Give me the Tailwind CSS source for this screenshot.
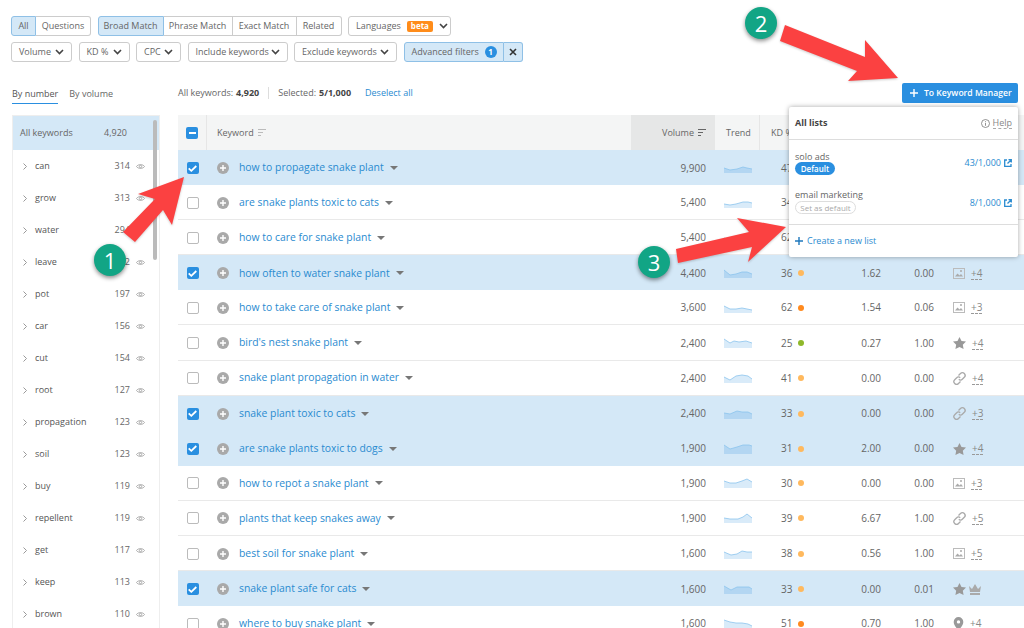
<!DOCTYPE html>
<html lang="en">
<head>
    <meta charset="UTF-8">
    <title>Keyword Magic Tool</title>
    <script src="https://cdn.jsdelivr.net/npm/@tailwindcss/browser@4"></script>
</head>
<body class="bg-white">
<div class="relative w-[1024px] h-[628px] overflow-hidden whitespace-nowrap text-[#666] text-[9px] font-['Open_Sans','Noto_Sans',sans-serif]">

    <!-- filters -->
    <div class="pt-[16px] pl-[11px] flex flex-col gap-[6px]">
        <div class="flex gap-[6.5px] h-[20px]">
            <div class="flex">
                <div class="w-[25px] flex items-center justify-center bg-[#d4e8f7] border border-[#8fc0e6] rounded-l-[3px]">All</div>
                <div class="w-[55px] flex items-center justify-center border border-l-0 border-[#ccc] rounded-r-[3px]">Questions</div>
            </div>
            <div class="flex">
                <div class="w-[66px] flex items-center justify-center bg-[#d4e8f7] border border-[#8fc0e6] rounded-l-[3px]">Broad Match</div>
                <div class="w-[69px] flex items-center justify-center border-y border-r border-[#ccc]">Phrase Match</div>
                <div class="w-[64px] flex items-center justify-center border-y border-r border-[#ccc]">Exact Match</div>
                <div class="w-[45px] flex items-center justify-center border-y border-r border-[#ccc] rounded-r-[3px]">Related</div>
            </div>
            <div class="w-[103px] flex items-center pl-[7px] border border-[#ccc] rounded-[3px]">
                Languages
                <span class="ml-[6px] px-[4px] h-[11px] leading-[10px] rounded-[2px] bg-[#ff8c1a] text-white text-[8px] font-bold">beta</span>
                <svg class="ml-[6px] w-[9px] h-[6px]" viewBox="0 0 9 6" fill="none" stroke="#444" stroke-width="1.6"><path d="M1 1l3.5 3.5L8 1"/></svg>
            </div>
        </div>
        <div class="flex gap-[6.5px] h-[20px]">
            <div class="w-[61px] flex items-center justify-between px-[7px] border border-[#ccc] rounded-[3px]">Volume <svg class="w-[9px] h-[6px]" viewBox="0 0 9 6" fill="none" stroke="#444" stroke-width="1.6"><path d="M1 1l3.5 3.5L8 1"/></svg></div>
            <div class="w-[51px] flex items-center justify-between px-[7px] border border-[#ccc] rounded-[3px]">KD % <svg class="w-[9px] h-[6px]" viewBox="0 0 9 6" fill="none" stroke="#444" stroke-width="1.6"><path d="M1 1l3.5 3.5L8 1"/></svg></div>
            <div class="w-[45px] flex items-center justify-between px-[7px] border border-[#ccc] rounded-[3px]">CPC <svg class="w-[9px] h-[6px]" viewBox="0 0 9 6" fill="none" stroke="#444" stroke-width="1.6"><path d="M1 1l3.5 3.5L8 1"/></svg></div>
            <div class="w-[100px] flex items-center justify-between px-[7px] border border-[#ccc] rounded-[3px]">Include keywords <svg class="w-[9px] h-[6px]" viewBox="0 0 9 6" fill="none" stroke="#444" stroke-width="1.6"><path d="M1 1l3.5 3.5L8 1"/></svg></div>
            <div class="w-[103px] flex items-center justify-between px-[7px] border border-[#ccc] rounded-[3px]">Exclude keywords <svg class="w-[9px] h-[6px]" viewBox="0 0 9 6" fill="none" stroke="#444" stroke-width="1.6"><path d="M1 1l3.5 3.5L8 1"/></svg></div>
            <div class="flex">
                <div class="w-[100px] flex items-center justify-between pl-[7px] pr-[6px] bg-[#d4e8f7] border border-[#8fc0e6] rounded-l-[3px]">Advanced filters <span class="w-[12px] h-[12px] rounded-full bg-[#2a8fe0] text-white text-[8px] font-bold flex items-center justify-center">1</span></div>
                <div class="w-[19px] flex items-center justify-center bg-[#d4e8f7] border-y border-r border-[#8fc0e6] rounded-r-[3px]">
                    <svg class="w-[8px] h-[8px]" viewBox="0 0 8 8" stroke="#333" stroke-width="1.6"><path d="M1 1l6 6M7 1L1 7"/></svg>
                </div>
            </div>
        </div>
    </div>

    <div class="flex mt-[21px]">
        <!-- sidebar -->
        <div class="w-[178px] pl-[12px] shrink-0">
            <div class="flex gap-[11px] h-[32px] pt-[4px]">
                <div class="h-[17px] border-b border-[#2a8fe0] text-[#555]">By number</div>
                <div class="text-[#666]">By volume</div>
            </div>
            <div class="relative w-[148px] border-x border-t border-[#eee]">
                <div class="h-[34px] flex items-center justify-between pl-[7px] pr-[32px] bg-[#d4e8f7]"><span>All keywords</span><span>4,920</span></div>
                <div id="groups"></div>
                <div class="absolute right-[2px] top-[4px] w-[4px] h-[140px] rounded-full bg-[#bbb]"></div>
            </div>
        </div>

        <!-- table -->
        <div class="w-[846px]">
            <div class="flex items-center h-[32px] pb-[12px]">
                <span>All keywords:</span><b class="ml-[3px] text-[#444]">4,920</b>
                <span class="ml-[9px] w-px h-[12px] bg-[#ddd]"></span>
                <span class="ml-[9px]">Selected:</span><b class="ml-[3px] text-[#444]">5/1,000</b>
                <span class="ml-[14px] text-[#2a8bd0]">Deselect all</span>
                <div class="ml-auto mr-[6px] w-[116px] h-[20px] bg-[#2a8fe0] rounded-[2px] text-white text-[8.6px] flex items-center pl-[8px] gap-[6px] font-semibold">
                    <svg class="w-[8px] h-[8px]" viewBox="0 0 8 8" stroke="#fff" stroke-width="1.4"><path d="M4 0v8M0 4h8"/></svg>
                    To Keyword Manager
                </div>
            </div>
            <div class="flex h-[35px] items-center bg-[#f4f5f5]">
                <div class="w-[29px] h-full flex items-center justify-center border-r border-[#e6e6e6]">
                    <span class="w-[12px] h-[12px] rounded-[2px] bg-[#2a8fe0] flex items-center justify-center"><span class="w-[7px] h-[2px] bg-white"></span></span>
                </div>
                <div class="w-[424px] pl-[10px] flex items-center gap-[4px]">Keyword
                    <svg class="w-[8px] h-[7px]" viewBox="0 0 8 7" stroke="#bbb"><path d="M0 .5h8M0 3.5h5M0 6.5h3"/></svg>
                </div>
                <div class="w-[84px] h-full flex items-center justify-end gap-[4px] pr-[9px] bg-[#e6e7e7]">Volume
                    <svg class="w-[8px] h-[7px]" viewBox="0 0 8 7" stroke="#666"><path d="M0 .5h8M0 3.5h5M0 6.5h3"/></svg>
                </div>
                <div class="w-[45px] h-full flex items-center pl-[11px] border-r border-[#e6e6e6]">Trend</div>
                <div class="pl-[11px]">KD %</div>
            </div>
            <div id="rows"></div>
        </div>
    </div>

    <!-- lists dropdown -->
    <div class="absolute left-[789px] top-[107px] w-[229px] h-[150px] bg-white rounded-[2px] shadow-[0_0_5px_rgba(0,0,0,0.35)] flex flex-col">
        <div class="h-[33px] flex items-center justify-between px-[6px] border-b border-[#ddd]">
            <b class="text-[#444]">All lists</b>
            <div class="flex items-center gap-[3px] text-[#888]">
                <svg class="w-[9px] h-[9px]" viewBox="0 0 9 9" fill="none" stroke="#777" stroke-width=".8"><circle cx="4.5" cy="4.5" r="4"/><path d="M4.5 2.2v.8M4.5 3.8v3"/></svg>
                <span class="border-b border-dashed border-[#aaa] leading-[11px]">Help</span>
            </div>
        </div>
        <div class="h-[38px] mt-[10px] px-[6px] flex justify-between">
            <div>
                <div class="leading-[13px] text-[#666]">solo ads</div>
                <div class="-mt-[1px] w-[40px] h-[13px] rounded-full bg-[#2a8fe0] text-white text-[8px] font-semibold flex items-center justify-center">Default</div>
            </div>
            <div class="flex items-center h-[26px] gap-[3px] text-[#2a8bd0]">43/1,000
                <svg class="w-[8px] h-[8px]" viewBox="0 0 8 8" fill="none" stroke="#2a8bd0" stroke-width="1.3"><path d="M3 1H.7v6.3H7V5M4.5.7h2.8v2.8M7 1L3.5 4.5"/></svg>
            </div>
        </div>
        <div class="h-[37px] px-[6px] flex justify-between border-b border-[#ddd]">
            <div>
                <div class="leading-[13px] text-[#666]">email marketing</div>
                <div class="w-[61px] h-[13px] rounded-full border border-[#ddd] text-[#aaa] text-[8px] flex items-center justify-center">Set as default</div>
            </div>
            <div class="flex items-center h-[29px] gap-[3px] text-[#2a8bd0]">8/1,000
                <svg class="w-[8px] h-[8px]" viewBox="0 0 8 8" fill="none" stroke="#2a8bd0" stroke-width="1.3"><path d="M3 1H.7v6.3H7V5M4.5.7h2.8v2.8M7 1L3.5 4.5"/></svg>
            </div>
        </div>
        <div class="flex-1 flex items-center gap-[4px] px-[6px] text-[#2a8bd0]">
            <svg class="w-[8px] h-[8px]" viewBox="0 0 8 8" stroke="#1f78bd" stroke-width="1.4"><path d="M4 0v8M0 4h8"/></svg>
            Create a new list
        </div>
    </div>

    <!-- annotations -->
    <svg class="absolute left-0 top-0 w-[1024px] h-[628px] pointer-events-none drop-shadow-[0_1px_1px_rgba(0,0,0,0.2)]" viewBox="0 0 1024 628">
        <path fill="#fb4141" d="M184 177L172 225L163 210L135 242L123 232L155 199L138 194Z"/>
        <path fill="#fb4141" d="M785 25L780 41L857 71L848 81L898 78L865 40L865 57Z"/>
        <path fill="#fb4141" d="M676 249L678 263L752 247L748 262L786 227L737 218L749 232Z"/>
    </svg>
    <div class="absolute left-[94px] top-[244px] w-[32px] h-[32px] rounded-full bg-[#12a585] text-white text-[22px] flex items-center justify-center shadow-[0_2px_4px_rgba(0,0,0,0.45)]">1</div>
    <div class="absolute left-[745px] top-[7px] w-[32px] h-[32px] rounded-full bg-[#12a585] text-white text-[22px] flex items-center justify-center shadow-[0_2px_4px_rgba(0,0,0,0.45)]">2</div>
    <div class="absolute left-[638px] top-[246px] w-[32px] h-[32px] rounded-full bg-[#12a585] text-white text-[22px] flex items-center justify-center shadow-[0_2px_4px_rgba(0,0,0,0.45)]">3</div>
</div>

<script>
    const groups = [['can','314'],['grow','313'],['water','294'],['leave','202'],['pot','197'],['car','156'],['cut','154'],['root','127'],['propagation','123'],['soil','123'],['buy','119'],['repellent','119'],['get','117'],['keep','113'],['brown','110']];
    const eye = '<svg class="w-[9px] h-[7px]" viewBox="0 0 9 7" fill="none" stroke="#999" stroke-width=".8"><path d="M.5 3.5C2 1 7 1 8.5 3.5 7 6 2 6 .5 3.5z"/><circle cx="4.5" cy="3.5" r="1.2"/></svg>';
    document.getElementById('groups').innerHTML = groups.map(g => `
        <div class="h-[32px] flex items-center pl-[10px] pr-[14px]">
            <svg class="w-[4px] h-[7px] mr-[8px]" viewBox="0 0 4 7" fill="none" stroke="#999"><path d="M.5.5l3 3-3 3"/></svg>
            <span class="text-[#555]">${g[0]}</span>
            <span class="ml-auto mr-[6px]">${g[1]}</span>${eye}
        </div>`).join('');

    const icons = {
        image: '<svg class="w-[12px] h-[11px]" viewBox="0 0 12 11" fill="none" stroke="#bbb"><rect x=".5" y=".5" width="11" height="10"/><path d="M2 8.5l2.5-3 2 2 1.5-1.500 2 2.500z" fill="#aaa" stroke="none"/><circle cx="8" cy="3" r="1" fill="#aaa" stroke="none"/></svg>',
        star: '<svg class="w-[13px] h-[12px]" viewBox="0 0 13 12" fill="#999"><path d="M6.500 0l2 4 4.500.6-3.200 3.200.8 4.200-4.100-2.100L2.400 12l.8-4.200L0 4.600 4.500 4z"/></svg>',
        link: '<svg class="w-[13px] h-[13px]" viewBox="0 0 13 13" fill="none" stroke="#aaa" stroke-width="1.3"><path d="M5.500 3.500l2-2a2.400 2.400 0 0 1 3.800 3.800l-2 2a2.400 2.400 0 0 1-3.500 0"/><path d="M7.500 9.500l-2 2a2.400 2.400 0 0 1-3.800-3.800l2-2a2.400 2.400 0 0 1 3.500 0"/></svg>',
        pin: '<svg class="w-[11px] h-[14px]" viewBox="0 0 11 14"><path fill="#999" fill-rule="evenodd" d="M5.500 14C3 10 .7 7.700.7 4.900a4.800 4.800 0 0 1 9.600 0C10.300 7.700 8 10 5.500 14zM5.500 3.200a1.700 1.700 0 1 0 0 3.400 1.700 1.700 0 0 0 0-3.400z"/></svg>'
    };
    const crown = '<svg class="w-[12px] h-[11px] ml-[3px]" viewBox="0 0 12 11" fill="#aaa"><path d="M0 2l3 3 3-5 3 5 3-3-1 6H1zM1 9h10v2H1z"/></svg>';
    const plus = '<svg class="w-[12px] h-[12px] shrink-0" viewBox="0 0 12 12"><circle cx="6" cy="6" r="6" fill="#a9a9a9"/><path d="M6 3v6M3 6h6" stroke="#fff" stroke-width="1.400"/></svg>';
    const tick = '<svg class="w-[9px] h-[7px]" viewBox="0 0 9 7" fill="none" stroke="#fff" stroke-width="1.800"><path d="M.7 3.300l2.600 2.500L8.300 1"/></svg>';
    const dots = { y: 'bg-[#ffb95e]', o: 'bg-[#ff8a1e]', g: 'bg-[#8fb82a]' };

    // keyword, volume, kd, dot, cpc, com, serp icon, extra, checked, sparkline
    // first three rows sit under the dropdown, so their right cells stay empty
    const rows = [
        ['how to propagate snake plant','9,900','47','','','','','',1,'0 5 6 7 13 6 19 4 23 5 28 6'],
        ['are snake plants toxic to cats','5,400','34','','','','','',0,'0 6 6 7 12 6 19 4 24 4 28 5'],
        ['how to care for snake plant','5,400','62','','','','','',0,'0 5 6 7 12 6 18 5 23 6 28 6'],
        ['how often to water snake plant','4,400','36','y','1.62','0.00','image','+4',1,'0 2 6 7 12 6 18 4 23 4 28 6'],
        ['how to take care of snake plant','3,600','62','o','1.54','0.06','image','+3',0,'0 3 6 6 12 6 18 5 23 6 28 7'],
        ["bird's nest snake plant",'2,400','25','g','0.27','1.00','star','+4',0,'0 1 6 5 10 3 15 4 22 3 28 5'],
        ['snake plant propagation in water','2,400','41','y','0.00','0.00','link','+4',0,'0 4 6 7 12 3 18 2 24 3 28 6'],
        ['snake plant toxic to cats','2,400','33','y','0.00','0.00','link','+3',1,'0 4 6 5 13 2 18 3 24 3 28 5'],
        ['are snake plants toxic to dogs','1,900','31','y','2.00','0.00','star','+4',1,'0 1 6 5 13 3 19 1 25 1 28 2'],
        ['how to repot a snake plant','1,900','30','y','0.00','0.00','image','+3',0,'0 3 6 5 12 5 18 3 23 1 28 4'],
        ['plants that keep snakes away','1,900','39','y','6.67','1.00','link','+5',0,'0 5 6 6 14 6 19 4 23 1 28 5'],
        ['best soil for snake plant','1,600','38','y','0.56','1.00','image','+5',0,'0 3 7 6 13 5 18 2 23 3 28 3'],
        ['snake plant safe for cats','1,600','33','y','0.00','0.01','star','',1,'0 2 7 6 13 3 20 3 25 3 28 5'],
        ['where to buy snake plant','1,600','51','o','0.70','1.00','pin','+4',0,'0 1 6 3 12 4 18 4 24 5 28 7']
    ];
    document.getElementById('rows').innerHTML = rows.map(r => `
        <div class="flex items-center h-[35.100px] pt-px text-[10px] ${r[8] ? 'bg-[#d4e8f7]' : 'bg-white border-b border-[#e9e9e9]'}">
            <div class="w-[29px] flex justify-center">
                ${r[8] ? `<span class="w-[12px] h-[12px] rounded-[2px] bg-[#2a8fe0] flex items-center justify-center">${tick}</span>`
                       : '<span class="w-[12px] h-[12px] rounded-[2px] border border-[#bbb] bg-white"></span>'}
            </div>
            <div class="w-[424px] pl-[10px] flex items-center">
                ${plus}
                <span class="ml-[10px] text-[10.400px] text-[#2a8bd0]">${r[0]}</span>
                <span class="ml-[6px] w-0 h-0 border-x-[4px] border-x-transparent border-t-[4px] border-t-[#777]"></span>
            </div>
            <div class="w-[84px] text-right pr-[9px]">${r[1]}</div>
            <div class="w-[45px] pl-[9px]">
                <svg class="w-[28px] h-[10px]" viewBox="0 0 28 10"><path d="M${r[9]} V10 H0Z" fill="${r[8] ? '#b3d6f2' : '#d9ebf9'}"/><path d="M${r[9]}" fill="none" stroke="#8cc4ee" stroke-width=".8"/></svg>
            </div>
            <div class="w-[80px] pl-[21px] flex items-center gap-[6px]">${r[2]}${r[3] ? `<span class="w-[6px] h-[6px] rounded-full ${dots[r[3]]}"></span>` : ''}</div>
            <div class="w-[50px] text-right pr-[9px]">${r[4]}</div>
            <div class="w-[53px] text-right pr-[9px]">${r[5]}</div>
            <div class="pl-[10px] flex items-center">
                ${r[6] ? icons[r[6]] : ''}
                ${r[7] ? `<span class="ml-[6px] border-b border-dashed border-[#999] leading-[12px] text-[#888]">${r[7]}</span>` : (r[6] ? crown : '')}
            </div>
        </div>`).join('');
</script>
</body>
</html>
